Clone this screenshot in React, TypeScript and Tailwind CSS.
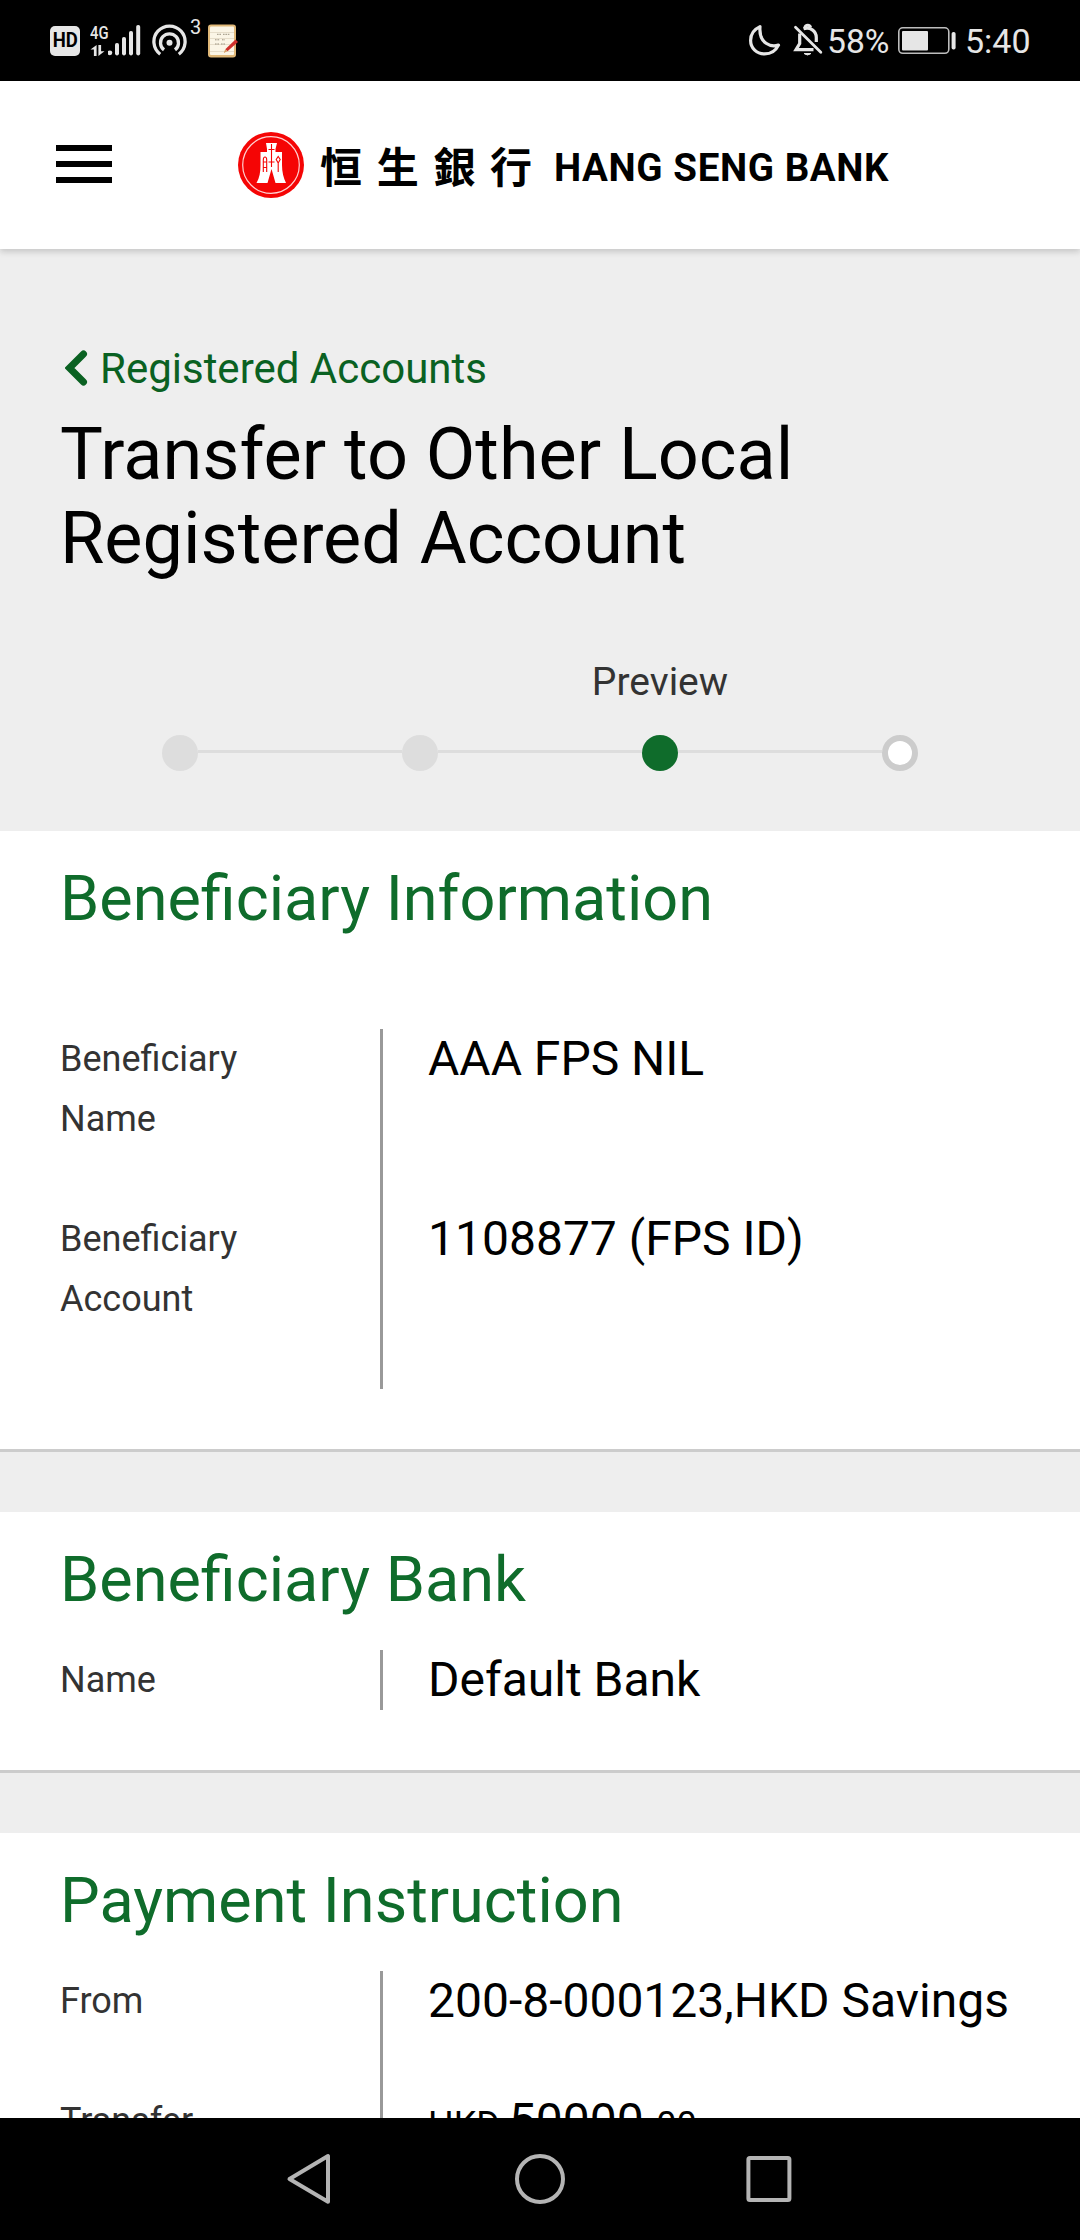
import type { ReactNode } from "react";

function StatusBar() {
  return (
    <div className="flex h-[81px] shrink-0 items-center justify-between bg-black pl-[50px] pr-[50px] text-[#e6e6e6]">
      <div className="flex h-full items-start">
        <div className="mt-[26px] flex h-[30px] w-[30px] items-center justify-center rounded-[5px] bg-[#e6e6e6]">
          <span className="origin-center scale-x-[0.95] text-[19.5px] font-bold leading-none text-black">HD</span>
        </div>
        <div className="ml-[10px] mt-[24px] flex h-[32px] w-[18px] flex-col">
          <span className="h-[16px] w-[24px] origin-left scale-x-[0.78] text-[19px] font-medium leading-[17px]">4G</span>
          <svg width="16" height="11" viewBox="0 0 16 11" className="mt-[5px]" fill="#e6e6e6">
            <path d="M0.5 4.5 6.6 0V11H3.9V4.5ZM8.4 0h2.700v6.300h3.400L8.400 11Z" />
          </svg>
        </div>
        <svg width="34" height="32" viewBox="0 0 34 32" className="mt-[24px]" fill="#e6e6e6">
          <circle cx="1.900" cy="28.800" r="2.400" />
          <rect x="7" y="19" width="4" height="12.400" rx="1.800" />
          <rect x="14" y="13" width="4" height="18.400" rx="1.800" />
          <rect x="21" y="7" width="4" height="24.400" rx="1.800" />
          <rect x="28.200" y="1" width="4" height="30.400" rx="1.800" />
        </svg>
        <svg width="36" height="32" viewBox="0 0 36 32" className="ml-[10px] mt-[24px]" fill="none" stroke="#e6e6e6" strokeWidth="3.300">
          <path d="M8.200 30.200A15.600 15.600 0 1 1 26.800 30.200" />
          <path d="M12 25.900A9 9 0 1 1 23 25.900" />
          <circle cx="17.500" cy="18.700" r="3" fill="#e6e6e6" stroke="none" />
        </svg>
        <span className="ml-[2px] mt-[17px] w-[18px] text-[20px] leading-[20px]">3</span>
        <svg width="32" height="34" viewBox="0 0 32 34" className="mt-[23.500px]">
          <rect x="0" y="0.500" width="28" height="33" rx="3" fill="#e0b878" />
          <rect x="2" y="2.500" width="24" height="28.500" rx="1" fill="#fbf5e6" />
          <path d="M2 8.500h24M2 14.500h24M2 20.500h24M2 27.500h24" stroke="#ddd3bd" strokeWidth="0.700" />
          <path d="M9 10.300h4M15 10.300h7M7 15.800h5M14 15.800h3M7 20h4M13 20h4" stroke="#9a917f" strokeWidth="1" strokeDasharray="1.600 0.800" />
          <path d="M27.500 15.600 30 18 19.500 27.300 17.300 25.200Z" fill="#cf2f2b" />
          <path d="M17.300 25.200 19.500 27.300 15.600 29Z" fill="#d9a066" />
        </svg>
      </div>
      <div className="flex h-full items-start">
        <svg width="33" height="34" viewBox="0 0 33 34" className="mt-[23px]" fill="none" stroke="#e6e6e6" strokeWidth="3.200" strokeLinejoin="round">
          <path d="M11 3.600C4.500 6.600 1.600 11 1.600 17.400c0 7.800 6.200 13.500 14 13.500 6.300 0 11.200-3.300 13.900-8.800C22.500 24.500 9.500 21 11 3.600Z" />
        </svg>
        <svg width="30" height="34" viewBox="0 0 30 34" className="ml-[11px] mt-[23px]" fill="none" stroke="#e6e6e6" strokeWidth="3.200">
          <path d="M2.500 4.300 27.800 29.300" strokeWidth="2.800" strokeLinecap="round" />
          <path d="M6.700 10.500V20.500L3 26.700H20.500" />
          <path d="M10.500 5.800C17 3.500 23.300 8 23.300 14.500V19" />
          <path d="M12 4.500a2.800 2.800 0 0 1 5.500 0" />
          <path d="M11 30.500h7q-3.500 3-7 0Z" strokeWidth="1" fill="#e6e6e6" />
        </svg>
        <span className="ml-[4px] mt-[23px] w-[66px] origin-left scale-x-[0.99] text-[34px] leading-[36px]">58%</span>
        <svg width="60" height="30" viewBox="0 0 60 30" className="ml-[5px] mt-[26px]">
          <rect x="0.800" y="1.800" width="50" height="25.500" rx="4" fill="none" stroke="#bdbdbd" strokeWidth="1.600" />
          <rect x="4" y="5" width="26" height="19.500" rx="1" fill="#e6e6e6" />
          <rect x="53.600" y="6" width="4" height="17.500" rx="1.800" fill="#e6e6e6" />
        </svg>
        <span className="ml-[7px] mt-[23px] w-[65px] origin-left text-[34px] leading-[36px]">5:40</span>
      </div>
    </div>
  );
}

function CoinLogo() {
  return (
    <svg width="68" height="68" viewBox="0 0 68 68">
      <circle cx="34" cy="34" r="33" fill="#f50505" />
      <circle cx="34" cy="34" r="28.300" fill="none" stroke="#ffd0d0" strokeWidth="1.200" />
      <path d="M29 12h11l-1.500 6v3h6.500v13c0 7 1.500 13 4 18H38.500L34.500 38 30.500 52H19.500c3-5 4-11 4-18V21h6.500v-3Z" fill="#fff" />
      <path d="M34.500 13v23M31.500 18.500h6M31.500 31h6" stroke="#f50505" strokeWidth="1.100" />
      <path d="M26.300 41V29q0-3 1.700-3t1.700 3v12M26.300 31h3.400M26.300 36.500h3.400M41.200 41v-9M41.200 32l-2-3.500 2-3 2 3Z" fill="none" stroke="#f50505" strokeWidth="1.100" />
    </svg>
  );
}

function Header() {
  return (
    <header className="z-10 flex h-[168px] shrink-0 items-start bg-white shadow-[0_3px_6px_rgba(0,0,0,0.16)]">
      <div className="ml-[56px] mt-[64px] flex w-[56px] flex-col gap-[10px]">
        <div className="h-[6px] bg-black" />
        <div className="h-[6px] bg-black" />
        <div className="h-[6px] bg-black" />
      </div>
      <div className="ml-[125px] mt-[50px] flex h-[68px] items-center">
        <CoinLogo />
        <span className="ml-[15px] w-[236px] whitespace-nowrap font-['Noto_Sans_CJK_TC','Noto_Sans_CJK_SC',sans-serif] text-[42px] font-bold leading-[66px] tracking-[14.700px] text-black">
          恒生銀行
        </span>
        <span className="ml-[-2px] mt-[6px] whitespace-nowrap text-[38.500px] font-bold leading-none tracking-[0.600px] text-black">
          HANG SENG BANK
        </span>
      </div>
    </header>
  );
}

function Stepper() {
  const line = <div className="mb-[3px] h-[3px] flex-1 bg-[#ddd]" />;
  return (
    <div className="mt-[74px] px-[162px]">
      <div className="ml-[378px] flex w-[240px] justify-center text-[39px] leading-[54px] text-[#333]">
        Preview
      </div>
      <div className="mt-[26px] flex items-center">
        <div className="h-9 w-9 rounded-full bg-[#ddd]" />
        {line}
        <div className="h-9 w-9 rounded-full bg-[#ddd]" />
        {line}
        <div className="h-9 w-9 rounded-full bg-[#0f6c2b]" />
        {line}
        <div className="h-9 w-9 rounded-full border-[6px] border-[#ccc] bg-white" />
      </div>
    </div>
  );
}

function Row({ label, children, tall }: { label: string; children: ReactNode; tall: string }) {
  return (
    <div className={`flex leading-[60px] ${tall}`}>
      <div className="w-[320px] pr-[110px] text-[36px] text-[#333]">{label}</div>
      <div className="flex-1 whitespace-nowrap border-l-[3px] border-[#999] pl-[45px] text-[48px] text-black">
        {children}
      </div>
    </div>
  );
}

function Section({ title, children, spaced }: { title: string; children: ReactNode; spaced?: boolean }) {
  return (
    <section className="mb-[60px] shrink-0 border-b-[3px] border-[#ccc] bg-white pb-[60px] pl-[60px]">
      <h2 className={`pb-[2px] text-[63px] leading-[136px] text-[#0f6c2b] ${spaced ? "mb-[60px]" : ""}`}>{title}</h2>
      {children}
    </section>
  );
}

export default function App() {
  return (
    <div className="flex h-[2240px] w-[1080px] flex-col overflow-hidden bg-[#eee] font-[Roboto,sans-serif]">
      <StatusBar />
      <Header />
      <main className="flex min-h-0 flex-1 flex-col overflow-hidden">
        <div className="h-[582px] shrink-0 pt-[90px]">
          <a className="flex items-center pl-[65px] text-[42px] leading-[60px] text-[#0a6122]">
            <svg width="24" height="38" viewBox="0 0 24 38" fill="none" stroke="#0a6122" strokeWidth="7" strokeLinecap="round" className="-mt-[2px]">
              <path d="M18.500 5 4.500 19 18.500 33" />
            </svg>
            <span className="ml-[11px]">Registered Accounts</span>
          </a>
          <h1 className="mt-[14px] pl-[60px] text-[72px] leading-[84px] text-black">
            Transfer to Other Local
            <br />
            Registered Account
          </h1>
          <Stepper />
        </div>
        <Section title="Beneficiary Information" spaced>
          <Row label="Beneficiary Name" tall="h-[180px]">AAA FPS NIL</Row>
          <Row label="Beneficiary Account" tall="h-[180px]">1108877 (FPS ID)</Row>
        </Section>
        <Section title="Beneficiary Bank">
          <Row label="Name" tall="h-[60px]">Default Bank</Row>
        </Section>
        <Section title="Payment Instruction">
          <Row label="From" tall="h-[120px]">200-8-000123,HKD Savings</Row>
          <Row label="Transfer Amount" tall="h-[120px]">
            <span className="text-[36px]">HKD </span>50000<span className="ml-[3px] text-[36px]">.00</span>
          </Row>
        </Section>
      </main>
      <nav className="flex h-[122px] shrink-0 items-start justify-center bg-black">
        <svg width="1080" height="122" viewBox="0 0 1080 122" fill="none" stroke="#b4b4b4" strokeWidth="4" strokeLinejoin="round">
          <path d="M289.500 61 328 38V83.700Z" />
          <circle cx="540" cy="61" r="23" />
          <rect x="748.400" y="40" width="41" height="42" rx="1.500" />
        </svg>
      </nav>
    </div>
  );
}
